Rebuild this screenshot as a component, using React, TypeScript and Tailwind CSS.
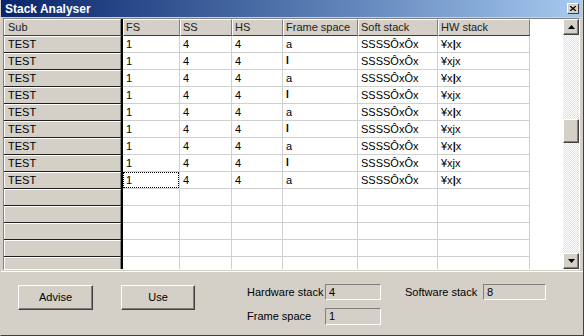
import React from "react";

const widths = ["w-[57px]", "w-[52px]", "w-[51px]", "w-[75px]", "w-[80px]", "w-[92px]"];
const headers = ["FS", "SS", "HS", "Frame space", "Soft stack", "HW stack"];

type Row = { sub: string; cells: React.ReactNode[] } | null;

const filled: Row[] = Array.from({ length: 9 }, (_, i) => ({
  sub: "TEST",
  cells: [
    "1",
    "4",
    "4",
    i % 2 === 0 ? "a" : <span className="font-bold text-[10px]">I</span>,
    "SSSSÔxÔx",
    i % 2 === 0 ? (
      <span>
        ¥x<span className="font-bold">|</span>x
      </span>
    ) : (
      "¥xjx"
    ),
  ],
}));
const rows: Row[] = [...filled, null, null, null, null, null];

function Arrow({ down }: { down?: boolean }) {
  return (
    <svg width="7" height="4" viewBox="0 0 7 4">
      {down ? <polygon points="0,0 7,0 3.5,4" fill="#000" /> : <polygon points="3.5,0 7,4 0,4" fill="#000" />}
    </svg>
  );
}

function ScrollBtn({ down }: { down?: boolean }) {
  return (
    <div className="box-border h-[16px] w-[16px] shrink-0 bg-[#d4d0c8] border border-t-white border-l-white border-r-[#404040] border-b-[#404040] shadow-[inset_-1px_-1px_#808080] flex items-center justify-center">
      <Arrow down={down} />
    </div>
  );
}

function Button({ label, w }: { label: string; w: string }) {
  return (
    <div
      className={`box-border h-[25px] ${w} bg-[#d4d0c8] border border-t-white border-l-white border-r-[#404040] border-b-[#404040] shadow-[inset_-1px_-1px_#808080] flex items-center justify-center text-black`}
    >
      {label}
    </div>
  );
}

function Field({ value, w, h }: { value: string; w: string; h: string }) {
  return (
    <div
      className={`box-border ${w} ${h} bg-[#d4d0c8] border border-t-[#808080] border-l-[#808080] border-r-white border-b-white pl-[3px] flex items-center text-black`}
    >
      {value}
    </div>
  );
}

export default function App() {
  return (
    <div
      className="box-border w-[584px] h-[336px] bg-[#d4d0c8] border-l border-l-[#d4d0c8] border-r border-r-[#404040] border-b border-b-[#404040] overflow-hidden flex flex-col text-[11px] leading-none text-black"
      style={{ fontFamily: '"Liberation Sans", Arial, sans-serif' }}
    >
      {/* Title bar */}
      <div className="h-[17px] shrink-0 mr-[1px] bg-gradient-to-r from-[#0a246a] to-[#a6caf0] flex items-center justify-between pl-[4px] pr-[3px]">
        <span className="text-white font-bold text-[12px]">Stack Analyser</span>
        <div className="box-border w-[12px] h-[11px] bg-[#d4d0c8] border border-t-white border-l-white border-r-[#404040] border-b-[#404040] flex items-center justify-center">
          <svg width="6" height="5" viewBox="0 0 6 5">
            <path d="M0 0 L6 5 M6 0 L0 5" stroke="#000" strokeWidth="1.3" />
          </svg>
        </div>
      </div>

      {/* Grid */}
      <div className="box-border mt-[1px] ml-[2px] w-[577px] h-[252px] shrink-0 border border-t-[#808080] border-l-[#808080] border-r-white border-b-white flex">
        <div className="flex-1 flex flex-col overflow-hidden bg-white">
          {/* header */}
          <div className="flex shrink-0">
            <div className="box-border w-[119px] h-[17px] shrink-0 border-r-2 border-r-black border-b border-b-[#404040]">
              <div className="box-border h-full bg-[#d4d0c8] border-t border-l border-white border-r border-r-[#808080] pl-[3px] flex items-center text-[#202020]">
                Sub
              </div>
            </div>
            {headers.map((h, i) => (
              <div
                key={h}
                className={`box-border ${widths[i]} h-[17px] shrink-0 bg-[#d4d0c8] border-t border-l border-white border-r border-r-[#808080] border-b border-b-[#404040] pl-[2px] flex items-center text-[#202020]`}
              >
                {h}
              </div>
            ))}
            <div className="flex-1 bg-white" />
          </div>
          {rows.map((r, ri) => (
            <div key={ri} className="flex shrink-0">
              <div className="box-border w-[119px] h-[17px] shrink-0 border-r-2 border-r-black border-b border-b-[#202020]">
                <div className="box-border h-full bg-[#d4d0c8] border-t border-l border-white border-r border-r-[#808080] pl-[3px] flex items-center">
                  {r ? r.sub : ""}
                </div>
              </div>
              {widths.map((w, ci) => (
                <div
                  key={ci}
                  className={`box-border ${w} h-[17px] shrink-0 border-r border-b border-[#cfcfcf] bg-white`}
                >
                  {ri === 8 && ci === 0 ? (
                    <div className="box-border h-full border border-dotted border-black pl-[2px] flex items-center">
                      {r ? r.cells[ci] : ""}
                    </div>
                  ) : (
                    <div className="h-full pl-[3px] flex items-center">{r ? r.cells[ci] : ""}</div>
                  )}
                </div>
              ))}
              <div className="flex-1 bg-white" />
            </div>
          ))}
        </div>
        {/* scrollbar */}
        <div className="w-[16px] shrink-0 flex flex-col">
          <ScrollBtn />
          <div className="flex-1 flex flex-col bg-[image:repeating-conic-gradient(#e4e1db_0%_25%,#ffffff_0%_50%)] bg-[length:2px_2px]">
            <div className="h-[84px] shrink-0" />
            <div className="box-border h-[24px] w-[16px] shrink-0 bg-[#d4d0c8] border border-t-white border-l-white border-r-[#404040] border-b-[#404040] shadow-[inset_-1px_-1px_#808080]" />
            <div className="flex-1" />
          </div>
          <ScrollBtn down />
        </div>
      </div>

      {/* Bottom panel */}
      <div className="flex-1 mt-[1px] border-t border-t-white flex items-start pl-[17px] pt-[12px]">
        <div className="mt-[1px]">
          <Button label="Advise" w="w-[75px]" />
        </div>
        <div className="mt-[1px] ml-[28px]">
          <Button label="Use" w="w-[74px]" />
        </div>
        <div className="ml-[52px] flex flex-col">
          <div className="flex items-center">
            <div className="w-[78px]">Hardware stack</div>
            <Field value="4" w="w-[56px]" h="h-[16px]" />
            <div className="w-[78px] ml-[24px]">Software stack</div>
            <Field value="8" w="w-[63px]" h="h-[16px]" />
          </div>
          <div className="flex items-center mt-[8px]">
            <div className="w-[78px]">Frame space</div>
            <Field value="1" w="w-[56px]" h="h-[17px]" />
          </div>
        </div>
      </div>
    </div>
  );
}
